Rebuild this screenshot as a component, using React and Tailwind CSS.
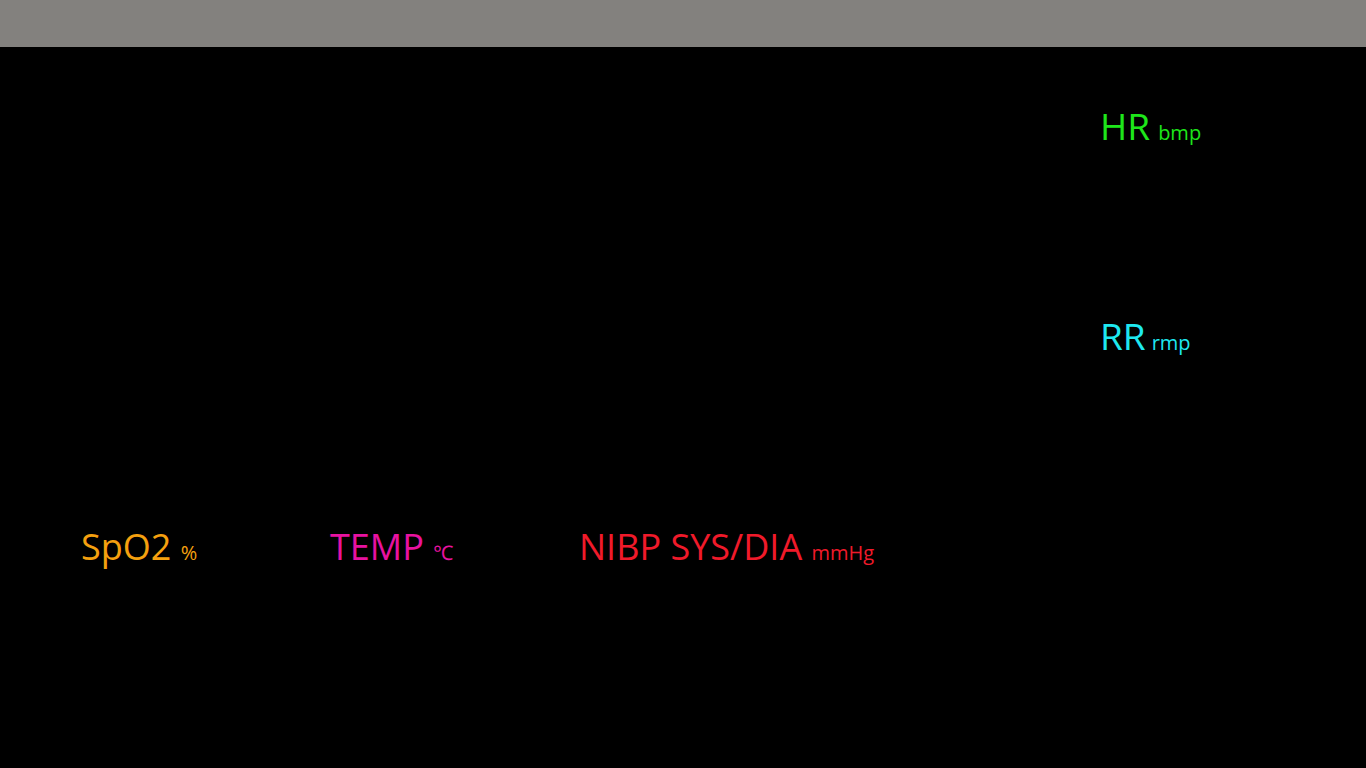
export default function App() {
  const font = { fontFamily: '"Open Sans", "Noto Sans", sans-serif' }

  return (
    <div className="h-screen w-full flex flex-col bg-black overflow-hidden" style={font}>
      <div className="h-[47px] bg-[#83817e] shrink-0" />

      <div className="flex-1 flex flex-col">
        <div className="flex">
          <div className="flex-1" />
          <div className="w-[266px] flex flex-col pt-[60px]">
            <div className="h-[210px] leading-none text-[37px] text-[#1ee61a]">
              HR<span className="ml-[8px] text-[20px] font-medium">bmp</span>
            </div>
            <div className="leading-none text-[37px] text-[#1ee8f0]">
              RR<span className="ml-[6px] text-[20px] font-medium">rmp</span>
            </div>
          </div>
        </div>

        <div className="flex pl-[81px] mt-[175px] leading-none text-[36px]">
          <div className="w-[249px] text-[#f5a00f]">
            SpO2 <span className="text-[20px]">%</span>
          </div>
          <div className="w-[249px] text-[#e812a0]">
            TEMP <span className="text-[20px]">℃</span>
          </div>
          <div className="text-[#f01a2a]">
            NIBP SYS/DIA <span className="text-[20px]">mmHg</span>
          </div>
        </div>
      </div>
    </div>
  )
}
